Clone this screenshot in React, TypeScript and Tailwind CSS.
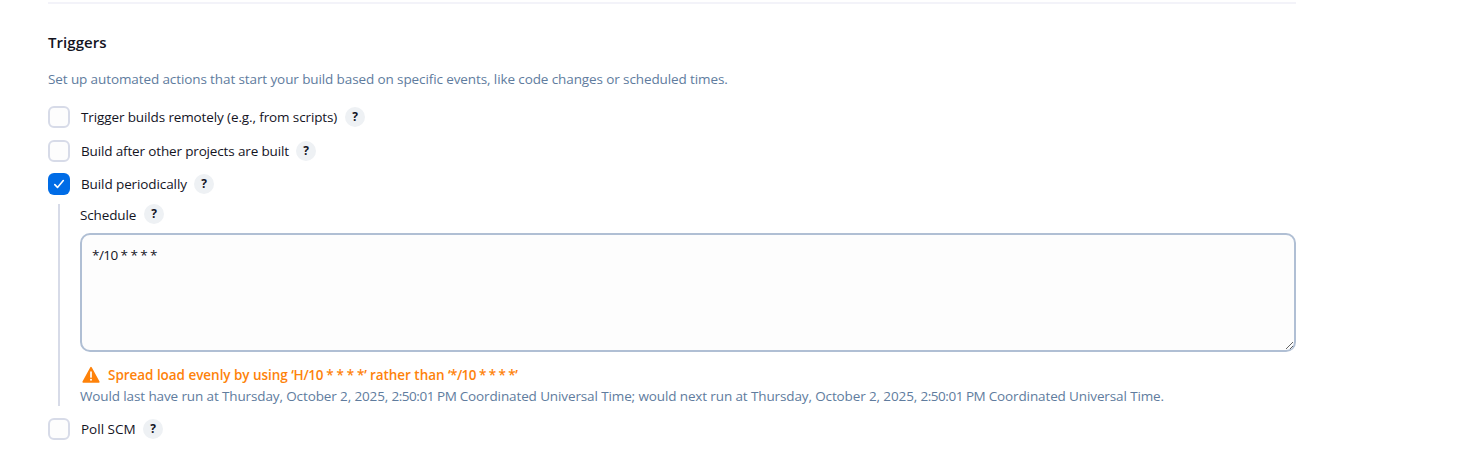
function Help() {
  return (
    <button
      type="button"
      aria-label="Help"
      className="flex size-5 shrink-0 items-center justify-center rounded-full bg-[#eef1f4] font-['Open_Sans',sans-serif] text-[12px] leading-none font-bold text-[#14141f]"
    >
      ?
    </button>
  );
}

function Box({ checked = false }: { checked?: boolean }) {
  return checked ? (
    <span className="flex size-[22px] shrink-0 items-center justify-center rounded-[6px] bg-[#006ce6]">
      <svg width="22" height="22" viewBox="0 0 22 22" fill="none" stroke="white" strokeWidth="1.6" strokeLinecap="round" strokeLinejoin="round">
        <path d="M6.8 11.6l2.7 2.8 5.8-6.8" />
      </svg>
    </span>
  ) : (
    <span className="size-[22px] shrink-0 rounded-[6px] border-2 border-[#d7dbe8] bg-[#fdfdfd]" />
  );
}

function Option({ label, labelClass, checked }: { label: string; labelClass: string; checked?: boolean }) {
  return (
    <div className="flex h-[22px] items-center">
      <Box checked={checked} />
      <span className={`ml-[11px] shrink-0 whitespace-nowrap ${labelClass}`}>{label}</span>
      <Help />
    </div>
  );
}

function Time() {
  return <span className="tracking-[-0.47px]">2:50:01 PM</span>;
}

export default function App() {
  return (
    <main className="h-[462px] w-[1482px] overflow-hidden bg-white pt-0.5 pl-12 font-['Open_Sans',sans-serif] text-[13.5px] leading-5 text-[#14141f]">
      <div className="w-[1248px]">
        <div className="h-0.5 bg-[#f3f3f9]" />
        <h2 className="mt-[26px] h-6 text-[15px] leading-6 font-semibold tracking-[0.06px]">Triggers</h2>
        <p className="mt-[15px] h-5 tracking-[-0.105px] whitespace-nowrap text-[#607c9e]">
          Set up automated actions that start your build based on specific events, like code changes or scheduled times.
        </p>
        <div className="mt-[17px]">
          <Option label="Trigger builds remotely (e.g., from scripts)" labelClass="w-[264px] tracking-[-0.12px]" />
        </div>
        <div className="mt-3">
          <Option label="Build after other projects are built" labelClass="w-[215px] tracking-[-0.15px]" />
        </div>
        <div className="mt-[11px]">
          <Option label="Build periodically" labelClass="w-[113px] tracking-[-0.1px]" checked />
        </div>
        <div className="mt-[9px] ml-[10px] h-[202px] border-l-2 border-[#d7dbe8] pl-5">
          <div className="flex h-5 items-center">
            <label className="w-16 pt-0.5 tracking-[-0.14px]">Schedule</label>
            <Help />
          </div>
          <textarea
            defaultValue="*/10 * * * *"
            className="mt-[9px] block h-[119px] w-[1216px] resize-y rounded-[10px] border-2 border-[#b0bfd4] bg-[#fdfdfd] px-[10px] py-[10px] tracking-[-0.55px] outline-none"
          />
          <div className="mt-[13px] flex h-5 items-center font-semibold text-[#fe820a]">
            <svg width="20" height="18" viewBox="0 0 20 18" className="mr-[7px] ml-px">
              <path d="M10 1.6L17.8 16H2.2z" fill="currentColor" stroke="currentColor" strokeWidth="1.6" strokeLinejoin="round" />
              <path d="M10 6v5" stroke="white" strokeWidth="1.7" strokeLinecap="round" />
              <circle cx="10" cy="13.7" r="1" fill="white" />
            </svg>
            <span className="tracking-[-0.04px] whitespace-nowrap">
              Spread load evenly by using <span className="tracking-[-0.32px]">‘H/10 * * * *’</span> rather than{" "}
              <span className="tracking-[-0.55px]">‘*/10 * * * *’</span>
            </span>
          </div>
          <p className="mt-px h-5 tracking-[-0.12px] whitespace-nowrap text-[#607c9e]">
            Would last have run at Thursday, October 2, 2025, <Time /> Coordinated Universal Time; would next run at Thursday,
            October 2, 2025, <Time /> Coordinated Universal Time.
          </p>
        </div>
        <div className="mt-3">
          <Option label="Poll SCM" labelClass="w-[62px]" />
        </div>
      </div>
    </main>
  );
}
